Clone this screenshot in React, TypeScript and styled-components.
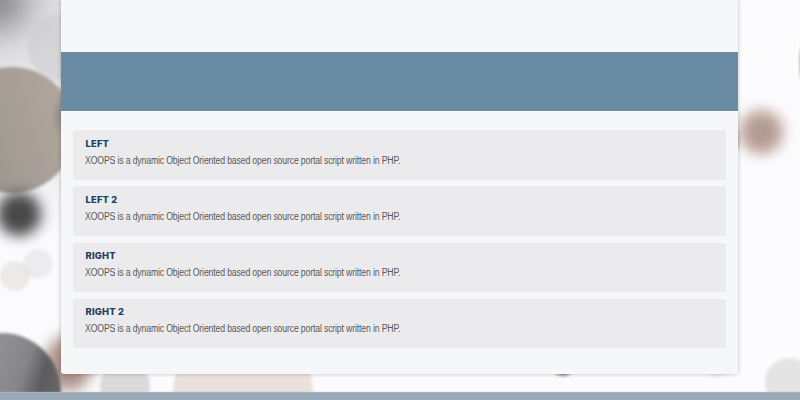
import React from "react";
import styled, { createGlobalStyle } from "styled-components";

const GlobalStyle = createGlobalStyle`
  * { box-sizing: border-box; }
  body { margin: 0; background: #fcfcfe; overflow: hidden; }
`;

const Page = styled.div`
  position: relative;
  width: 800px;
  height: 400px;
  overflow: hidden;
  display: flex;
  flex-direction: column;
  font-family: "Liberation Sans", Arial, sans-serif;
`;

const Backdrop = styled.svg`
  position: absolute;
  inset: 0;

  filter {
    color-interpolation-filters: sRGB;
  }
`;

const Content = styled.main`
  position: relative;
  width: 677px;
  height: 374px;
  margin-left: 61px;
  padding-top: 52px;
  flex: none;
  background: #f5f7f9;
  border-radius: 0 0 3px 3px;
  box-shadow: 0 0 4px rgba(0, 0, 0, 0.26);
`;

const Banner = styled.div`
  height: 59px;
  background: #6a8ba4;
  box-shadow: 0 1px 0 #fff;
`;

const Blocks = styled.div`
  display: flex;
  flex-direction: column;
  gap: 6.6px;
  padding: 19.4px 12px 0;
`;

const Block = styled.section`
  height: 49.5px;
  padding: 7.6px 12.5px 0;
  border-radius: 2px;
  background: #ebebed;
`;

const Title = styled.h2`
  margin: 0;
  width: max-content;
  font-family: Inter, "Liberation Sans", sans-serif;
  font-size: 9.4px;
  line-height: 12px;
  font-weight: 800;
  letter-spacing: 0.18px;
  color: #1f4160;
`;

const Copy = styled.p`
  margin: 5px 0 0 -0.5px;
  width: max-content;
  font-size: 10px;
  line-height: 12px;
  letter-spacing: -0.18px;
  color: #58585a;
  transform: translateY(0.4px) scaleX(0.871);
  transform-origin: left;
`;

const Footer = styled.footer`
  position: relative;
  height: 8px;
  margin-top: auto;
  background: #98aab7;
  border-top: 1px solid #acb4b9;
  box-shadow: 0 0 1px #b8b8b8;
`;

const titles = ["LEFT", "LEFT 2", "RIGHT", "RIGHT 2"];

function BokehBackdrop() {
  return (
    <Backdrop width="800" height="400" viewBox="0 0 800 400" aria-hidden="true">
      <defs>
        <filter id="soft" x="-50%" y="-50%" width="200%" height="200%"><feGaussianBlur stdDeviation="1.5" /></filter>
        <filter id="mid" x="-80%" y="-80%" width="260%" height="260%"><feGaussianBlur stdDeviation="7" /></filter>
        <filter id="wide" x="-150%" y="-150%" width="400%" height="400%"><feGaussianBlur stdDeviation="20" /></filter>
        <linearGradient id="haze" x1="0" y1="0" x2="0" y2="1">
          <stop offset="0" stopColor="#e0e0e2" />
          <stop offset=".3" stopColor="#e8e8ea" />
          <stop offset=".5" stopColor="#f4f4f6" />
          <stop offset=".6" stopColor="#fbfbfd" />
          <stop offset="1" stopColor="#fcfcfe" />
        </linearGradient>
        <linearGradient id="taupe" x1="0" y1=".7" x2="1" y2=".4">
          <stop offset="0" stopColor="#918a85" />
          <stop offset=".4" stopColor="#a29b94" />
          <stop offset="1" stopColor="#b1a69d" />
        </linearGradient>
        <linearGradient id="slate" gradientUnits="userSpaceOnUse" x1="0" y1="350" x2="62" y2="370">
          <stop offset="0" stopColor="#909092" />
          <stop offset=".45" stopColor="#858587" />
          <stop offset=".75" stopColor="#5c5c5e" />
          <stop offset="1" stopColor="#646466" />
        </linearGradient>
      </defs>
      <rect width="80" height="400" fill="url(#haze)" />
      <circle cx="-4" cy="0" r="29" fill="#69696c" filter="url(#wide)" />
      <circle cx="60" cy="47" r="33" fill="#cacacc" opacity=".5" filter="url(#soft)" />
      <circle cx="12" cy="130" r="63" fill="url(#taupe)" filter="url(#soft)" />
      <ellipse cx="64" cy="116" rx="4" ry="12" fill="#59595b" opacity=".8" filter="url(#mid)" />
      <circle cx="19" cy="214" r="22" fill="#484849" filter="url(#mid)" />
      <circle cx="15" cy="276" r="15" fill="#eae6e4" opacity=".85" filter="url(#soft)" />
      <circle cx="38" cy="264" r="15" fill="#dedee0" opacity=".5" filter="url(#soft)" />
      <ellipse cx="69" cy="363" rx="24" ry="28" fill="#ab9187" filter="url(#mid)" />
      <circle cx="2" cy="392" r="59" fill="url(#slate)" filter="url(#soft)" />
      <circle cx="125" cy="386" r="25" fill="#dadada" filter="url(#soft)" />
      <circle cx="243" cy="393" r="70" fill="#ebe1dc" filter="url(#soft)" />
      <circle cx="563" cy="364" r="12" fill="#909090" filter="url(#soft)" />
      <circle cx="717" cy="363" r="14" fill="#ededee" filter="url(#soft)" />
      <circle cx="789" cy="382" r="24" fill="#e4e4e5" filter="url(#soft)" />
      <circle cx="761.5" cy="132" r="22" fill="#c2a59a" filter="url(#mid)" />
      <ellipse cx="761.5" cy="132" rx="13" ry="14" fill="#a09490" opacity=".6" filter="url(#mid)" />
      <ellipse cx="736" cy="140" rx="3" ry="10" fill="#b5b1b0" filter="url(#soft)" />
      <ellipse cx="803" cy="63" rx="3" ry="18" fill="#8b8b8d" filter="url(#soft)" />
    </Backdrop>
  );
}

export default function App() {
  return (
    <>
      <GlobalStyle />
      <Page>
        <BokehBackdrop />
        <Content>
          <Banner />
          <Blocks>
            {titles.map((title) => (
              <Block key={title}>
                <Title>{title}</Title>
                <Copy>XOOPS is a dynamic Object Oriented based open source portal script written in PHP.</Copy>
              </Block>
            ))}
          </Blocks>
        </Content>
        <Footer />
      </Page>
    </>
  );
}
